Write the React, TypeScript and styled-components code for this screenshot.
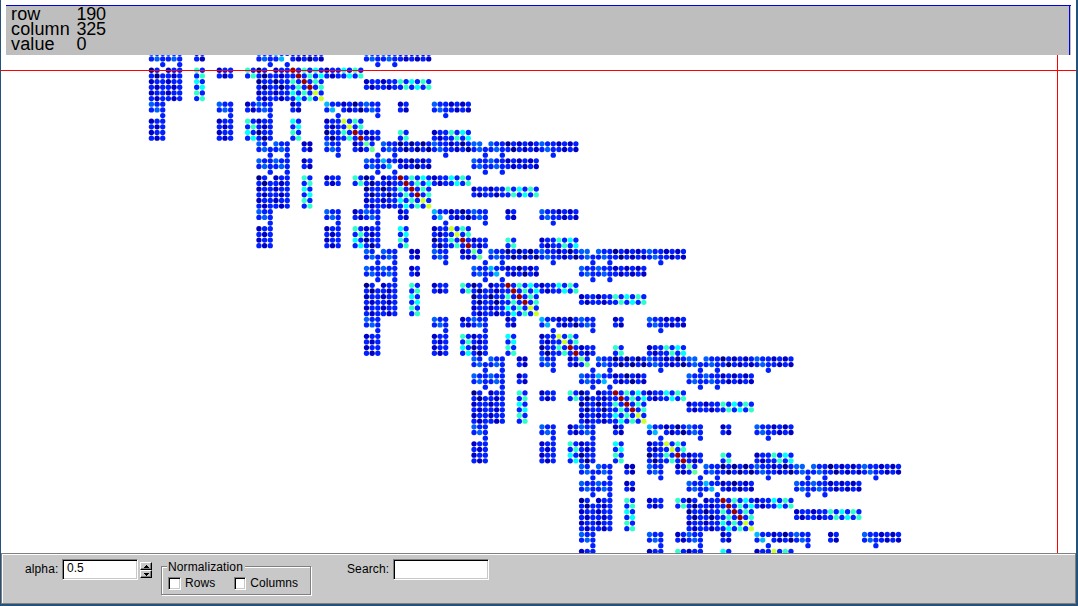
import React from "react";
import styled, { createGlobalStyle } from "styled-components";

const GlobalStyle = createGlobalStyle`
  * { box-sizing: border-box; }
  body { margin: 0; background: #fff; overflow: hidden; }
`;

const Window = styled.div`
  display: flex;
  flex-direction: column;
  width: 1078px;
  height: 606px;
  background: #fff;
  border: solid #24527b;
  border-width: 0 2px 2px 1px;
  font-family: "Liberation Sans", Arial, sans-serif;
  font-size: 12px;
  color: #000;
`;

const Readout = styled.dl`
  display: grid;
  grid-template-columns: 66px 1fr;
  grid-auto-rows: 15px;
  margin: 5px 6px 0 5px;
  padding: 0 0 0 5px;
  width: 1065px;
  height: 50px;
  background: #bebebe;
  border-top: 1px solid #0000e0;
  box-shadow: inset -1px 0 #bebebe, inset -2px 0 #0000e0;
  font-size: 18px;
  line-height: 16px;
`;

const Term = styled.dt`
  margin: 0;
  letter-spacing: 0.15px;
`;

const Datum = styled.dd`
  margin: 0 0 0 -0.5px;
  letter-spacing: -0.2px;
`;

const Plot = styled.div`
  position: relative;
  height: 498px;
  overflow: hidden;

  svg {
    display: block;
  }
`;

const HairH = styled.div`
  position: absolute;
  left: 0;
  right: 0;
  top: 15px;
  height: 1px;
  background: #f00;
`;

const HairV = styled.div`
  position: absolute;
  top: 0;
  bottom: 0;
  left: 1056px;
  width: 1px;
  background: #f00;
`;

const Controls = styled.form`
  display: flex;
  align-items: flex-start;
  height: 51px;
  padding: 4px 0 0 23px;
  background: #c8c8c8;
  border: 1px solid #808080;
  box-shadow: inset 1px 1px #fff;
`;

const Caption = styled.label<{ $width: number; $gap?: number }>`
  width: ${(p) => p.$width}px;
  margin-left: ${(p) => p.$gap ?? 0}px;
  padding-top: 4px;
  line-height: 14px;
  letter-spacing: 0.12px;
  white-space: nowrap;
`;

const Field = styled.input<{ $width: number }>`
  width: ${(p) => p.$width}px;
  height: 21px;
  margin: 1px 0 0;
  padding: 0 3px 3px 4px;
  border: 1px solid;
  border-color: #808080 #fff #fff #808080;
  border-radius: 0;
  outline: none;
  background: #fff;
  box-shadow: inset 1px 1px #000, inset -1px -1px #c8c8c8;
  font: 12px "Liberation Sans", Arial, sans-serif;
  color: #000;
`;

const Spinner = styled.div`
  display: flex;
  flex-direction: column;
  margin: 4px 0 0 2px;
`;

const SpinButton = styled.button`
  display: flex;
  align-items: center;
  justify-content: center;
  width: 12px;
  height: 8px;
  padding: 0;
  border: 1px solid;
  border-color: #fff #000 #000 #fff;
  border-radius: 0;
  background: #c8c8c8;
  box-shadow: inset -1px -1px #808080;
`;

const GroupFrame = styled.div`
  position: relative;
  display: flex;
  width: 150px;
  height: 29px;
  margin: 8px 0 0 9px;
  padding: 10px 0 0 6px;
  border: 1px solid #808080;
  box-shadow: 1px 1px #fff, inset 1px 1px #fff;
`;

const Legend = styled.span`
  position: absolute;
  left: 5px;
  top: -7px;
  padding: 0 2px 0 1px;
  background: #c8c8c8;
  line-height: 14px;
  letter-spacing: 0.12px;
`;

const Option = styled.label<{ $width: number }>`
  display: flex;
  width: ${(p) => p.$width}px;
  line-height: 12px;
  letter-spacing: 0.05px;
`;

const Box = styled.span`
  width: 13px;
  height: 13px;
  margin-right: 4px;
  border: 1px solid;
  border-color: #808080 #fff #fff #808080;
  background: #fff;
  box-shadow: inset 1px 1px #000, inset -1px -1px #c8c8c8;
`;

const PITCH = 5.66;
const PERIOD = 19;
const LEFT = 150.4;
const TOP = -18.7;

const palette: Record<string, string> = {
  n: "#000090",
  d: "#0000c4",
  b: "#0020ff",
  l: "#0060ff",
  k: "#00b8ff",
  c: "#00ffff",
  t: "#30ffcc",
  g: "#60ff98",
  y: "#ccff30",
  r: "#960000",
};

// One block row of the banded matrix; every block is 19 cells wide.
const blockRow = [
  "lb.lbb..dd..lbb..db" + "gb.lbbnbnbnblbbdbnb" + "ll.lbbnbdbdblbbdbdb",
  "blbblb..bd..blb..bd" + "bg.blbbnbnbnblbbdbn" + "blbblbbnbdbdblbbdbd",
  "..b..b........b...." + "..b..b........b...." + "..b..b........b....",
  "lbblbb..db........." + "lbbkbbdbnbdb......." + "lbblbbdbdbdb.......",
  "blbblb..bd........." + "blbbk.bdbnbd......." + "blbblbbdbdbd.......",
  "..b..b............." + "..b..b............." + "..b..b.............",
  "nb.dbb..tb..dbb..tb" + "nb.dbbrbtbcbdbbcbtb",
  "bnbbdb..bt..bdb..bt" + "bnbbdbbrbtbcbdbbcbt",
  "dbbdbb..cb........." + "nbbnbbtbrbtb......." + "dbbdbbtbcbtb.......",
  "bdbbdb..bc........." + "bnbbnbbtbrbt......." + "bdbbdbbtbcbt.......",
  "dbbdbb..tb........." + "dbbdbbcbtbyb.......",
  "bdbbdb..bt........." + "bdbbdbbcbtby.......",
  "lbb.........lbb..db" + "lbb...db....kbbdbnb" + "lbb...db....lbbdbdb",
  "blb.........blb..bd" + "blb...bd....bk.bdbn" + "blb...bd....blbbdbd",
  "..b...........b...." + "..b...........b...." + "..b...........b....",
  "dbb.........dbb..tb" + "dbb...cb....dbbybtb",
  "bdb.........bdb..bt" + "bdb...bc....bdbbybt",
  "dbb.........dbb..cb" + "nbb...tb....nbbtbrb" + "dbb...tb....dbbtbcb",
  "bdb.........bdb..bc" + "bnb...bt....bnbbtbr" + "bdb...bt....bdbbtbc",
];

function Matrix() {
  const dots: React.ReactNode[] = [];
  for (let block = 0; block < 5; block++) {
    blockRow.forEach((line, r) => {
      const cy = TOP + (block * PERIOD + r) * PITCH;
      if (cy < -3 || cy > 502) return;
      line.split("").forEach((cell, c) => {
        if (cell === ".") return;
        const cx = LEFT + (block * PERIOD + c) * PITCH;
        dots.push(
          <circle key={`${block}-${r}-${c}`} cx={cx.toFixed(2)} cy={cy.toFixed(2)} r="2.65" fill={palette[cell]} />
        );
      });
    });
  }
  return (
    <svg width="1075" height="498" viewBox="0 0 1075 498">
      {dots}
    </svg>
  );
}

const Arrow = ({ up }: { up?: boolean }) => (
  <svg width="6" height="3" viewBox="0 0 6 3" shapeRendering="crispEdges">
    <path d={up ? "M0 3L3 0L6 3Z" : "M0 0L3 3L6 0Z"} fill="#000" />
  </svg>
);

export default function App() {
  return (
    <>
      <GlobalStyle />
      <Window>
        <Readout>
          <Term>row</Term>
          <Datum>190</Datum>
          <Term>column</Term>
          <Datum>325</Datum>
          <Term>value</Term>
          <Datum>0</Datum>
        </Readout>
        <Plot>
          <Matrix />
          <HairV />
          <HairH />
        </Plot>
        <Controls>
          <Caption $width={37}>alpha:</Caption>
          <Field $width={76} defaultValue="0.5" />
          <Spinner>
            <SpinButton type="button"><Arrow up /></SpinButton>
            <SpinButton type="button"><Arrow /></SpinButton>
          </Spinner>
          <GroupFrame>
            <Legend>Normalization</Legend>
            <Option $width={66}><Box />Rows</Option>
            <Option $width={64}><Box />Columns</Option>
          </GroupFrame>
          <Caption $width={46} $gap={36}>Search:</Caption>
          <Field $width={96} />
        </Controls>
      </Window>
    </>
  );
}
